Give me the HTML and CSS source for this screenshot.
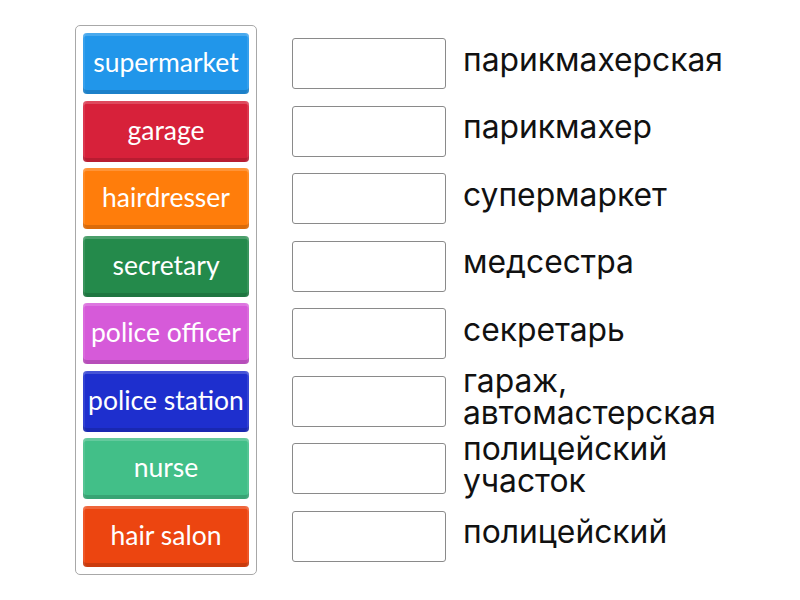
FILE: index.html
```html
<!DOCTYPE html>
<html>
<head>
<meta charset="utf-8">
<link rel="stylesheet" href="styles.css">
</head>
<body>
<div class="game">
  <div class="tiles">
    <div class="tile blue">supermarket</div>
    <div class="tile red">garage</div>
    <div class="tile orange">hairdresser</div>
    <div class="tile green">secretary</div>
    <div class="tile pink">police officer</div>
    <div class="tile navy">police station</div>
    <div class="tile mint">nurse</div>
    <div class="tile vermilion">hair salon</div>
  </div>
  <div class="targets">
    <div class="row"><div class="slot"></div><div class="label">парикмахерская</div></div>
    <div class="row"><div class="slot"></div><div class="label">парикмахер</div></div>
    <div class="row"><div class="slot"></div><div class="label">супермаркет</div></div>
    <div class="row"><div class="slot"></div><div class="label">медсестра</div></div>
    <div class="row"><div class="slot"></div><div class="label">секретарь</div></div>
    <div class="row"><div class="slot"></div><div class="label">гараж,<br>автомастерская</div></div>
    <div class="row"><div class="slot"></div><div class="label">полицейский<br>участок</div></div>
    <div class="row"><div class="slot"></div><div class="label">полицейский</div></div>
  </div>
</div>
</body>
</html>
```

FILE: styles.css
```css
html, body {
  margin: 0;
  padding: 0;
  background: #ffffff;
}

.game {
  display: flex;
  align-items: flex-start;
  padding: 25px 0 0 75px;
}

.tiles {
  display: flex;
  flex-direction: column;
  gap: 6.5px;
  padding: 7px;
  border: 1px solid #a8a8a8;
  border-radius: 5px;
  width: 166px;
}

.tile {
  height: 61px;
  border-radius: 4px;
  display: flex;
  align-items: center;
  justify-content: center;
  padding-bottom: 3px;
  box-sizing: border-box;
  color: #ffffff;
  font-family: Lato, "Open Sans", sans-serif;
  font-size: 26.5px;
  white-space: nowrap;
  box-shadow:
    inset 0 3px 0 rgba(255, 255, 255, 0.18),
    inset 0 -4px 0 rgba(0, 0, 0, 0.14),
    inset 2px 0 0 rgba(255, 255, 255, 0.10),
    inset -2px 0 0 rgba(255, 255, 255, 0.10);
}

.blue { background: #2196ea; }
.red { background: #d7213a; }
.orange { background: #ff7d0b; }
.green { background: #248a4b; }
.pink { background: #d65ad9; }
.navy { background: #1e2fce; }
.mint { background: #42bf88; }
.vermilion { background: #ec4510; }

.targets {
  display: flex;
  flex-direction: column;
  gap: 6.5px;
  padding-top: 8px;
  margin-left: 35px;
}

.row {
  height: 61px;
  display: flex;
  align-items: center;
}

.slot {
  width: 152px;
  height: 49px;
  border: 1px solid #8a8a8a;
  border-radius: 3px;
  flex: none;
}

.label {
  margin-left: 17px;
  padding-bottom: 8px;
  font-family: Inter, "Noto Sans", sans-serif;
  font-size: 31.8px;
  line-height: 32px;
  color: #111111;
}
```
